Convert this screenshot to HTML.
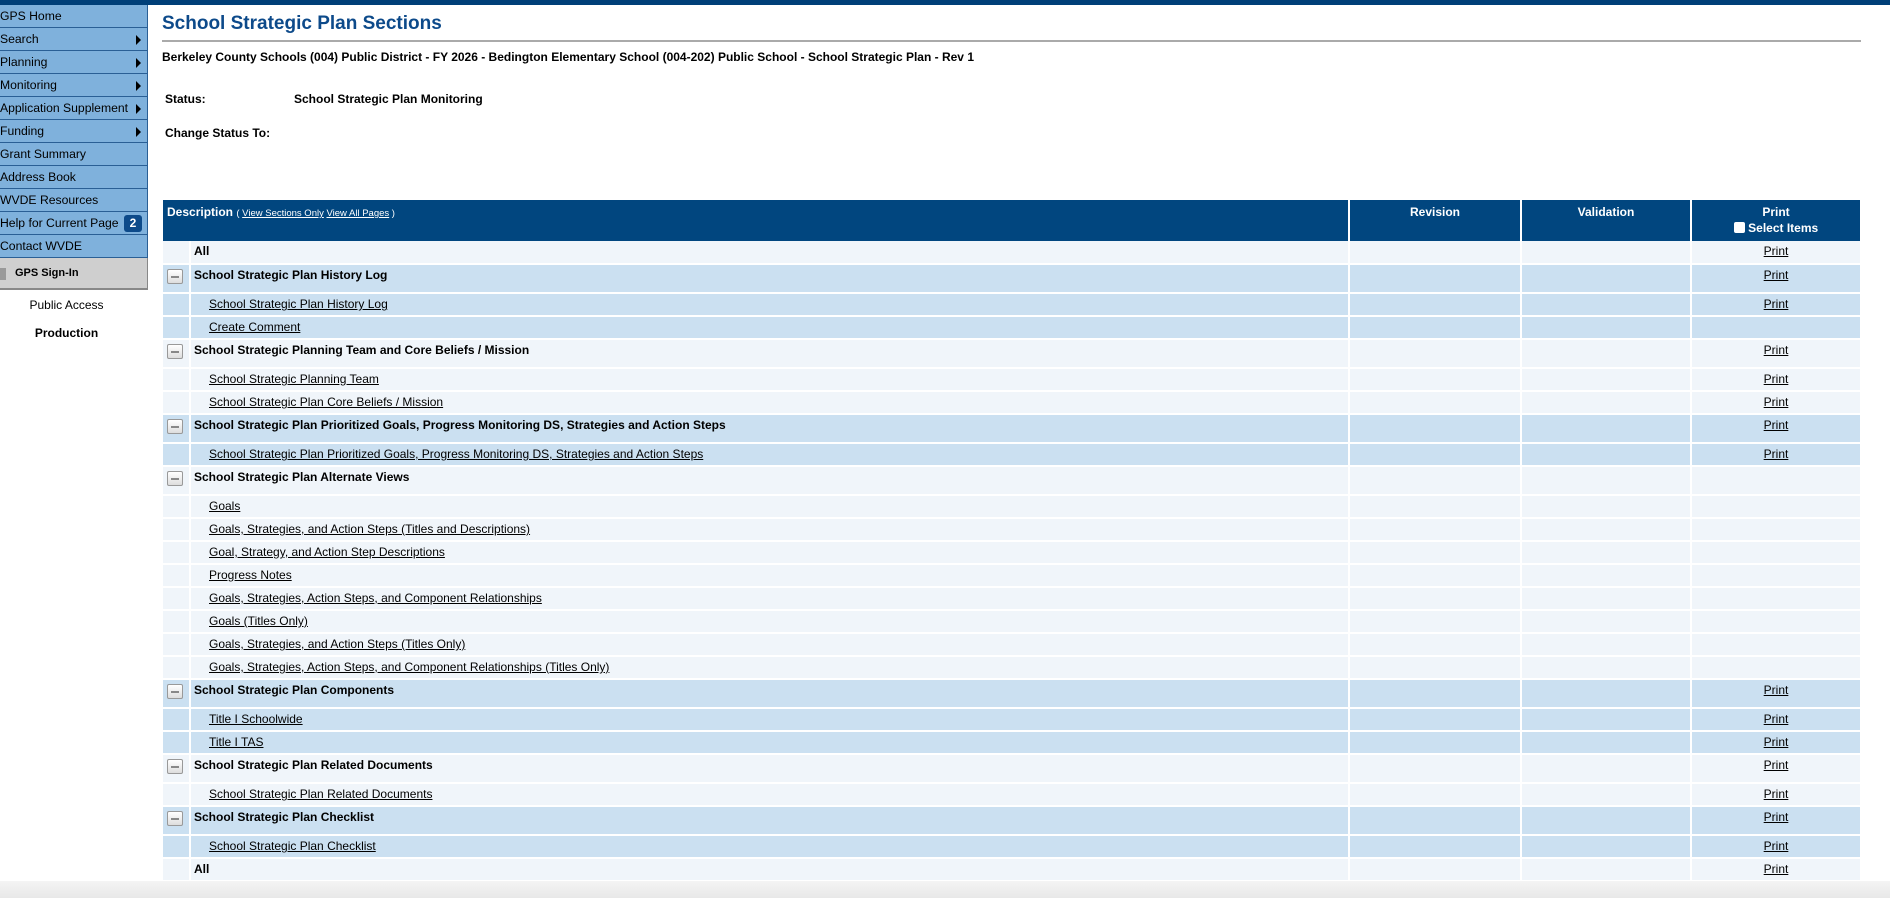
<!DOCTYPE html>
<html><head><meta charset="utf-8"><style>
*{margin:0;padding:0;box-sizing:border-box}
body{width:1890px;height:898px;overflow:hidden;background:#fff;font-family:"Liberation Sans",Arial,sans-serif;color:#000;position:relative}
#top{position:absolute;left:0;top:0;width:1890px;height:5px;background:#003f78}
#side{position:absolute;left:0;top:5px;width:148px}
.mi{height:23px;background:#7fb1dc;border-bottom:1px solid #2a5f95;font-size:12.2px;line-height:22px;position:relative;white-space:nowrap;border-right:1px solid #2a5f95}
.mi .ar{position:absolute;right:6px;top:7px;width:0;height:0;border-left:5px solid #000;border-top:5px solid transparent;border-bottom:5px solid transparent}
.badge{position:absolute;right:5px;top:3px;background:#0d4a8a;color:#fff;font-size:12px;font-weight:bold;border-radius:3px;width:18px;height:17px;text-align:center;line-height:17px}
.sign{height:32px;background:#cfcfcf;border-bottom:2px solid #888;border-right:1px solid #888;font-size:11px;font-weight:bold;line-height:30px;padding-left:15px;position:relative}
.sign:before{content:"";position:absolute;left:0;top:10px;width:6px;height:12px;background:#999}
.pa{text-align:center;font-size:12px;margin-top:8px;height:20px;width:133px}
.pr{text-align:center;font-size:12px;font-weight:bold;margin-top:8px;width:133px}
#main{position:absolute;left:162px;top:13px;width:1700px}
h1{color:#0d4a8a;font-size:19px;font-weight:bold;height:27px}
hr{border:0;border-top:2px solid #aaa;margin:0 0 8px 0;width:1699px}
.sub{font-size:12px;font-weight:bold}
.st{position:absolute;font-size:12px;font-weight:bold}
table{position:absolute;left:163px;top:200px;width:1697px;border-collapse:collapse;font-size:12px;table-layout:fixed}
th{background:#01467f;color:#fff;font-weight:bold;vertical-align:top;padding-top:4px;height:41px;border-right:2px solid #fff;font-size:12px;line-height:16px}
th:last-child{border-right:0}
th small{font-size:9.5px;font-weight:normal}
th small u{font-size:9.5px;color:#fff}
td{border-right:2px solid #fff;border-bottom:2px solid #fff;padding:0;vertical-align:top;white-space:nowrap}
td:last-child{border-right:0}
tr.l td{background:#f0f5fa}
tr.b td{background:#cbe0f1}
tr.s td{height:23px;line-height:20px}
tr.h td{height:29px;line-height:20px;font-weight:bold}
td.d{padding-left:3px}
tr.s td.d.i{padding-left:18px}
td.p{text-align:center}
a,u{color:#000;text-decoration:underline}
.mn{display:inline-block;width:16px;height:15px;margin:4px 0 0 4px;border:1px solid #999;background:linear-gradient(#fff,#ddd);position:relative;border-radius:2px}
.mn:after{content:"";position:absolute;left:3px;top:6px;width:8px;height:2px;background:#888}
#fade{position:absolute;left:0;top:881px;width:1890px;height:17px;background:linear-gradient(#f4f4f4,#e8e8e8)}
</style></head><body>
<div id="top"></div>
<div id="side">
<div class="mi">GPS Home</div>
<div class="mi">Search<span class="ar"></span></div>
<div class="mi">Planning<span class="ar"></span></div>
<div class="mi">Monitoring<span class="ar"></span></div>
<div class="mi">Application Supplement<span class="ar"></span></div>
<div class="mi">Funding<span class="ar"></span></div>
<div class="mi">Grant Summary</div>
<div class="mi">Address Book</div>
<div class="mi">WVDE Resources</div>
<div class="mi">Help for Current Page<span class="badge">2</span></div>
<div class="mi">Contact WVDE</div>
<div class="sign">GPS Sign-In</div>
<div class="pa">Public Access</div>
<div class="pr">Production</div>
</div>
<div id="main">
<h1>School Strategic Plan Sections</h1>
<hr>
<div class="sub">Berkeley County Schools (004) Public District - FY 2026 - Bedington Elementary School (004-202) Public School - School Strategic Plan - Rev 1</div>
</div>
<div class="st" style="left:165px;top:92px">Status:</div>
<div class="st" style="left:294px;top:92px">School Strategic Plan Monitoring</div>
<div class="st" style="left:165px;top:126px">Change Status To:</div>
<table>
<colgroup><col style="width:27px"><col style="width:1159px"><col style="width:172px"><col style="width:170px"><col style="width:169px"></colgroup>
<tr><th colspan="2" style="text-align:left;padding-left:4px">Description <small>( <u>View Sections Only</u> <u>View All Pages</u> )</small></th><th>Revision</th><th>Validation</th><th>Print<br><span style="display:inline-block;width:11px;height:11px;background:#fff;border-radius:2px;vertical-align:-1px"></span> Select Items</th></tr>
<tr class="l s"><td></td><td class="d"><b>All</b></td><td></td><td></td><td class="p"><a>Print</a></td></tr>
<tr class="b h"><td><span class="mn"></span></td><td class="d">School Strategic Plan History Log</td><td></td><td></td><td class="p" style="font-weight:normal"><a>Print</a></td></tr>
<tr class="b s"><td></td><td class="d i"><a>School Strategic Plan History Log</a></td><td></td><td></td><td class="p"><a>Print</a></td></tr>
<tr class="b s"><td></td><td class="d i"><a>Create Comment</a></td><td></td><td></td><td class="p"></td></tr>
<tr class="l h"><td><span class="mn"></span></td><td class="d">School Strategic Planning Team and Core Beliefs / Mission</td><td></td><td></td><td class="p" style="font-weight:normal"><a>Print</a></td></tr>
<tr class="l s"><td></td><td class="d i"><a>School Strategic Planning Team</a></td><td></td><td></td><td class="p"><a>Print</a></td></tr>
<tr class="l s"><td></td><td class="d i"><a>School Strategic Plan Core Beliefs / Mission</a></td><td></td><td></td><td class="p"><a>Print</a></td></tr>
<tr class="b h"><td><span class="mn"></span></td><td class="d">School Strategic Plan Prioritized Goals, Progress Monitoring DS, Strategies and Action Steps</td><td></td><td></td><td class="p" style="font-weight:normal"><a>Print</a></td></tr>
<tr class="b s"><td></td><td class="d i"><a>School Strategic Plan Prioritized Goals, Progress Monitoring DS, Strategies and Action Steps</a></td><td></td><td></td><td class="p"><a>Print</a></td></tr>
<tr class="l h"><td><span class="mn"></span></td><td class="d">School Strategic Plan Alternate Views</td><td></td><td></td><td class="p"></td></tr>
<tr class="l s"><td></td><td class="d i"><a>Goals</a></td><td></td><td></td><td></td></tr>
<tr class="l s"><td></td><td class="d i"><a>Goals, Strategies, and Action Steps (Titles and Descriptions)</a></td><td></td><td></td><td></td></tr>
<tr class="l s"><td></td><td class="d i"><a>Goal, Strategy, and Action Step Descriptions</a></td><td></td><td></td><td></td></tr>
<tr class="l s"><td></td><td class="d i"><a>Progress Notes</a></td><td></td><td></td><td></td></tr>
<tr class="l s"><td></td><td class="d i"><a>Goals, Strategies, Action Steps, and Component Relationships</a></td><td></td><td></td><td></td></tr>
<tr class="l s"><td></td><td class="d i"><a>Goals (Titles Only)</a></td><td></td><td></td><td></td></tr>
<tr class="l s"><td></td><td class="d i"><a>Goals, Strategies, and Action Steps (Titles Only)</a></td><td></td><td></td><td></td></tr>
<tr class="l s"><td></td><td class="d i"><a>Goals, Strategies, Action Steps, and Component Relationships (Titles Only)</a></td><td></td><td></td><td></td></tr>
<tr class="b h"><td><span class="mn"></span></td><td class="d">School Strategic Plan Components</td><td></td><td></td><td class="p" style="font-weight:normal"><a>Print</a></td></tr>
<tr class="b s"><td></td><td class="d i"><a>Title I Schoolwide</a></td><td></td><td></td><td class="p"><a>Print</a></td></tr>
<tr class="b s"><td></td><td class="d i"><a>Title I TAS</a></td><td></td><td></td><td class="p"><a>Print</a></td></tr>
<tr class="l h"><td><span class="mn"></span></td><td class="d">School Strategic Plan Related Documents</td><td></td><td></td><td class="p" style="font-weight:normal"><a>Print</a></td></tr>
<tr class="l s"><td></td><td class="d i"><a>School Strategic Plan Related Documents</a></td><td></td><td></td><td class="p"><a>Print</a></td></tr>
<tr class="b h"><td><span class="mn"></span></td><td class="d">School Strategic Plan Checklist</td><td></td><td></td><td class="p" style="font-weight:normal"><a>Print</a></td></tr>
<tr class="b s"><td></td><td class="d i"><a>School Strategic Plan Checklist</a></td><td></td><td></td><td class="p"><a>Print</a></td></tr>
<tr class="l s"><td></td><td class="d"><b>All</b></td><td></td><td></td><td class="p"><a>Print</a></td></tr>
</table>
<div id="fade"></div>
</body></html>
